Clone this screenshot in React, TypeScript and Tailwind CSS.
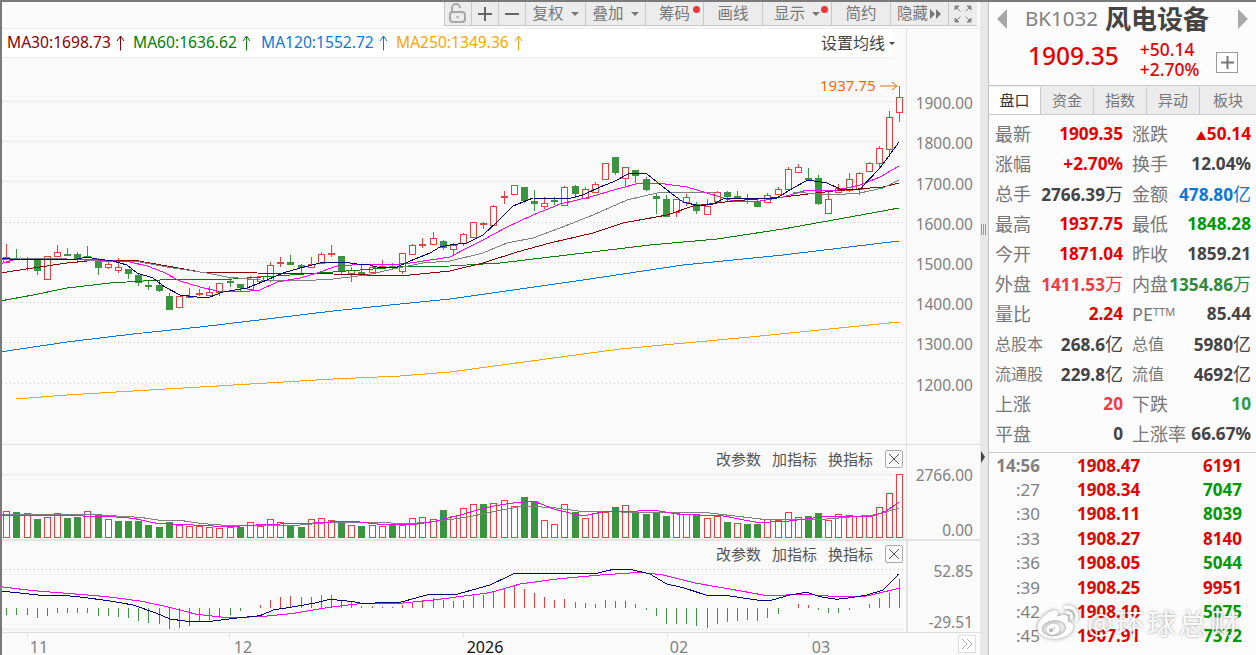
import { ReactNode } from "react";
import { FaWeibo } from "react-icons/fa";

const RED = "#e84040";
const GREEN = "#3a9440";

// body top, body bottom, wick top, wick bottom (page px), colour
const CANDLES: [number, number, number, number, "r" | "g"][] = [
  [257, 262, 244, 263, "r"], [258, 260, 249, 260, "g"], [258, 260, 257, 271, "r"], [260, 271, 260, 275, "g"],
  [256, 279, 256, 279, "r"], [252, 256, 245, 257, "r"], [254, 255, 248, 256, "g"], [254, 260, 252, 263, "g"],
  [256, 258, 246, 258, "g"], [261, 268, 258, 275, "g"], [264, 267, 262, 269, "r"], [267, 270, 258, 273, "r"],
  [269, 274, 269, 279, "g"], [275, 283, 273, 286, "g"], [285, 287, 280, 290, "g"], [285, 291, 280, 292, "g"],
  [296, 310, 293, 310, "g"], [296, 307, 296, 307, "r"], [296, 297, 288, 298, "r"], [293, 295, 289, 296, "r"],
  [292, 295, 286, 296, "r"], [283, 292, 283, 296, "r"], [281, 282, 277, 287, "g"], [284, 288, 284, 291, "g"],
  [279, 289, 276, 290, "r"], [276, 281, 276, 283, "r"], [265, 280, 262, 282, "r"], [262, 264, 257, 267, "r"],
  [262, 265, 255, 265, "g"], [265, 268, 264, 275, "g"], [264, 267, 257, 268, "r"], [254, 263, 252, 263, "r"],
  [253, 255, 245, 257, "r"], [256, 272, 256, 274, "g"], [270, 273, 267, 282, "r"], [272, 273, 265, 275, "g"],
  [267, 272, 265, 272, "r"], [266, 267, 260, 267, "r"], [266, 267, 263, 269, "g"], [253, 271, 253, 274, "r"],
  [245, 254, 244, 255, "r"], [244, 246, 238, 248, "r"], [238, 244, 232, 245, "r"], [241, 248, 240, 250, "g"],
  [245, 249, 243, 256, "r"], [234, 243, 233, 246, "r"], [222, 237, 222, 237, "r"], [223, 224, 222, 229, "r"],
  [206, 225, 205, 225, "r"], [196, 197, 191, 204, "r"], [185, 194, 185, 194, "r"], [187, 201, 187, 203, "g"],
  [201, 204, 190, 211, "g"], [203, 206, 197, 209, "r"], [200, 201, 197, 205, "g"], [187, 205, 186, 205, "r"],
  [186, 194, 185, 198, "g"], [189, 198, 187, 198, "r"], [184, 192, 182, 192, "r"], [163, 179, 163, 179, "r"],
  [157, 173, 157, 175, "g"], [167, 178, 167, 186, "r"], [170, 176, 170, 183, "g"], [179, 190, 177, 191, "g"],
  [196, 199, 193, 214, "g"], [199, 217, 195, 217, "g"], [199, 212, 199, 217, "r"], [197, 202, 194, 206, "r"],
  [204, 211, 202, 214, "g"], [206, 214, 199, 215, "r"], [192, 201, 191, 202, "r"], [192, 197, 191, 201, "g"],
  [196, 197, 191, 198, "g"], [198, 199, 194, 204, "g"], [201, 207, 198, 207, "g"], [195, 202, 193, 203, "r"],
  [189, 194, 187, 195, "r"], [169, 189, 167, 190, "r"], [167, 172, 164, 172, "r"], [178, 180, 168, 180, "g"],
  [178, 204, 175, 205, "g"], [199, 213, 190, 213, "r"], [188, 192, 184, 193, "r"], [179, 190, 173, 192, "r"],
  [173, 189, 172, 195, "r"], [163, 171, 162, 171, "r"], [148, 163, 146, 168, "r"], [117, 149, 111, 157, "r"],
  [97, 112, 86, 122, "r"],
];

const VOLUME: [number, "r" | "g"][] = [
  [212, "r"], [216, "g"], [220, "r"], [237, "g"], [232, "r"], [220, "r"], [234, "g"], [232, "g"], [214, "r"], [222, "g"],
  [238, "r"], [243, "g"], [243, "g"], [243, "g"], [255, "g"], [261, "g"], [246, "g"], [255, "r"], [258, "r"], [257, "r"],
  [262, "r"], [265, "r"], [260, "r"], [260, "g"], [247, "r"], [258, "r"], [238, "r"], [247, "r"], [256, "g"], [261, "g"],
  [238, "r"], [235, "r"], [241, "r"], [245, "g"], [256, "r"], [258, "g"], [256, "r"], [258, "r"], [252, "g"], [254, "r"],
  [235, "r"], [232, "r"], [238, "r"], [210, "g"], [227, "r"], [205, "r"], [193, "r"], [192, "g"], [190, "r"], [181, "r"],
  [198, "r"], [171, "g"], [183, "g"], [241, "r"], [253, "r"], [193, "r"], [215, "g"], [235, "r"], [220, "r"], [215, "r"],
  [201, "g"], [196, "r"], [220, "g"], [222, "g"], [218, "g"], [228, "g"], [220, "r"], [222, "r"], [222, "g"], [235, "r"],
  [228, "r"], [246, "g"], [250, "r"], [252, "g"], [252, "g"], [238, "r"], [240, "r"], [217, "r"], [232, "r"], [229, "g"],
  [219, "g"], [240, "r"], [223, "r"], [226, "r"], [228, "r"], [228, "r"], [202, "r"], [160, "r"], [103, "r"],
];

const MACD_BARS = [
  525, 525, 525, 533, 527, 518, 518, 518, 518, 527, 527, 530, 533, 543, 548, 552, 568, 563, 557, 547, 540, 535, 525, 513,
  503, 495, 480, 470, 468, 472, 470, 465, 465, 480, 485, 497, 497, 500, 500, 495, 487, 480, 475, 480, 483, 480, 466, 465,
  455, 448, 438, 447, 459, 470, 480, 477, 486, 489, 492, 480, 483, 483, 492, 510, 527, 553, 553, 553, 557, 563, 552, 545,
  543, 540, 542, 533, 522, 503, 491, 495, 510, 519, 519, 510, 503, 491, 473, 460, 417,
];

const MA5 = "0,258 10,259 33,260 52,259 77,259 87,257 97,259 113,261 127,265 137,273 153,278 165,287 180,295 197,297 210,297 223,292 247,288 267,280 283,273 300,268 320,263 343,262 357,264 370,265 380,268 397,267 410,261 430,253 440,247 450,245 467,243 483,235 497,222 513,206 533,198 567,199 583,195 600,187 613,182 630,173 647,174 657,182 667,190 683,202 700,206 713,204 723,199 750,198 777,198 793,188 808,180 827,183 840,189 860,189 880,168 899,142";
const MA10 = "0,264 13,260 33,259 80,259 100,260 130,262 147,266 163,272 180,281 200,287 217,291 240,292 260,290 277,282 300,278 317,273 337,266 367,264 390,265 410,263 430,260 450,257 467,248 483,240 507,227 533,215 560,204 590,197 617,189 640,183 657,183 687,187 707,193 733,201 760,201 783,197 807,190 837,190 860,185 880,177 899,166";
const MA20 = "0,260 20,258 67,259 100,261 140,262 173,268 207,273 227,277 260,280 300,281 333,279 367,275 393,269 423,263 450,261 483,253 507,243 533,238 560,228 593,215 627,200 657,193 717,192 793,192 833,195 860,193 883,188 899,180";
const MA30 = "0,273 33,268 67,263 97,260 133,260 167,266 200,272 257,273 333,274 400,276 450,271 483,263 517,252 550,243 593,233 623,223 667,215 693,206 733,201 783,197 833,191 883,187 899,183";
const MA60 = "0,301 33,295 67,288 110,283 160,280 233,279 333,272 400,267 450,266 500,263 567,255 650,245 717,239 783,229 850,217 899,208";
const MA120 = "0,352 67,342 133,334 200,327 267,319 333,311 400,304 450,299 583,280 683,265 783,255 899,241";
const MA250 = "16,399 67,395 133,391 200,387 267,383 333,379 400,376 450,372 620,349 750,337 899,322";

// volume and macd lines, as read from the 3x crops
const z = (pts: number[][], ox: number) => pts.map(([x, y]) => `${ox + x / 3},${440 + y / 3}`).join(" ");
const VOL_MA5 =
  z([[0, 225], [180, 225], [250, 228], [310, 228], [400, 235], [470, 250], [540, 253], [640, 258], [720, 258], [800, 253], [920, 250], [1010, 245], [1070, 245], [1130, 252], [1230, 255], [1300, 245], [1380, 225], [1470, 200]], 0) +
  " " + z([[60, 190], [130, 183], [200, 210], [280, 228], [340, 215], [500, 212], [560, 222], [700, 228], [800, 247], [880, 245], [1000, 230], [1150, 228], [1190, 212], [1226, 187]], 490);
const VOL_MA10 =
  z([[0, 222], [300, 225], [420, 232], [480, 241], [540, 241], [600, 250], [700, 258], [800, 255], [900, 255], [1000, 247], [1100, 248], [1240, 250], [1300, 245], [1400, 232], [1470, 217]], 0) +
  " " + z([[100, 198], [190, 203], [280, 215], [500, 217], [650, 218], [820, 238], [1000, 238], [1160, 224], [1226, 205]], 490);
const DIF =
  z([[0, 453], [70, 460], [130, 467], [200, 467], [250, 472], [330, 483], [400, 495], [470, 520], [510, 537], [570, 545], [640, 543], [720, 533], [780, 527], [820, 510], [900, 497], [950, 488], [990, 478], [1060, 485], [1090, 491], [1160, 487], [1200, 487], [1280, 465], [1370, 463], [1470, 435]], 0) +
  " " + z([[70, 402], [320, 400], [370, 388], [420, 388], [480, 402], [530, 432], [580, 443], [650, 466], [720, 468], [800, 480], [840, 482], [900, 465], [950, 457], [990, 470], [1040, 478], [1090, 472], [1130, 465], [1180, 450], [1226, 402]], 490);
const DEA =
  z([[0, 440], [100, 452], [200, 460], [320, 470], [420, 483], [500, 500], [590, 523], [680, 533], [780, 530], [880, 520], [980, 503], [1070, 492], [1200, 490], [1300, 480], [1470, 458]], 0) +
  " " + z([[90, 432], [200, 417], [330, 405], [450, 397], [520, 405], [620, 430], [720, 447], [830, 467], [950, 463], [1040, 470], [1130, 468], [1226, 445]], 490);

const barX = (i: number) => Math.round(6.3 + 10.148 * i);

function Line({ points, color }: { points: string; color: string }) {
  return <polyline points={points} fill="none" stroke={color} strokeWidth={1} shapeRendering="crispEdges" />;
}

function DotLine({ y }: { y: number }) {
  return <line x1={2} x2={906} y1={y + 0.5} y2={y + 0.5} stroke="#cfcfcf" strokeDasharray="1 3" />;
}

function Candle({ i }: { i: number }) {
  const [top, bot, wt, wb, c] = CANDLES[i];
  const x = barX(i);
  const color = c === "r" ? RED : GREEN;
  const solid = c === "g" || bot - top <= 2;
  return (
    <g shapeRendering="crispEdges">
      <line x1={x + 0.5} x2={x + 0.5} y1={wt} y2={top} stroke={color} />
      <line x1={x + 0.5} x2={x + 0.5} y1={bot} y2={wb} stroke={color} />
      {solid ? (
        <rect x={x - 3} y={top} width={7} height={Math.max(bot - top, 2)} fill={color} />
      ) : (
        <rect x={x - 2.5} y={top + 0.5} width={6} height={bot - top} fill="#fafafa" stroke={color} />
      )}
    </g>
  );
}

function UpArrow({ color }: { color: string }) {
  return (
    <svg width="9" height="16" viewBox="0 0 9 16" className="ml-[5px]">
      <path d="M4.5 15.5V1M1 6l3.5-5L8 6" fill="none" stroke={color} />
    </svg>
  );
}

function Caret() {
  return <span className="ml-[7px] inline-block h-0 w-0 border-x-[4px] border-t-[4px] border-x-transparent border-t-[#777]" />;
}

function Cell({ w, children, dot }: { w: string; children: ReactNode; dot?: boolean }) {
  return (
    <div className={`relative flex h-full items-center justify-center border-r border-[#c8c8c8] ${w}`}>
      {children}
      {dot && <span className="absolute top-[4px] right-[3px] h-[7px] w-[7px] rounded-full bg-[#f5333f]" />}
    </div>
  );
}

function Toolbar() {
  return (
    <div className="flex h-[24px] justify-end pr-[3px]">
      <div className="flex border-b border-l border-[#c8c8c8] bg-[#ececec] text-[15.5px] leading-none text-[#777]">
        <Cell w="w-[27px]">
          <svg width="20" height="21" viewBox="0 0 20 21" fill="none" stroke="#a8a8a8" strokeWidth="2">
            <path d="M4 9V5a4 4 0 0 1 8 0" />
            <rect x="2" y="9" width="15" height="10" rx="3" />
            <path d="M9.5 13v2" />
          </svg>
        </Cell>
        <Cell w="w-[27px]">
          <svg width="16" height="16" viewBox="0 0 16 16" stroke="#666" strokeWidth="2">
            <path d="M1 8h14M8 1v14" />
          </svg>
        </Cell>
        <Cell w="w-[27px]">
          <svg width="16" height="16" viewBox="0 0 16 16" stroke="#666" strokeWidth="2">
            <path d="M1 8h14" />
          </svg>
        </Cell>
        <Cell w="w-[60px]">
          复权
          <Caret />
        </Cell>
        <Cell w="w-[60px]">
          叠加
          <Caret />
        </Cell>
        <Cell w="w-[58px]" dot>
          筹码
        </Cell>
        <Cell w="w-[59px]">画线</Cell>
        <Cell w="w-[69px]" dot>
          显示
          <Caret />
        </Cell>
        <Cell w="w-[59px]">简约</Cell>
        <Cell w="w-[58px]">
          隐藏
          <svg width="12" height="10" viewBox="0 0 12 10" fill="#777" className="ml-[2px] shrink-0">
            <path d="M0 0l5 5-5 5zM6 0l5 5-5 5z" />
          </svg>
        </Cell>
        <div className="flex w-[28px] items-center justify-center">
          <svg width="18" height="18" viewBox="0 0 18 18" fill="#888" stroke="#888">
            <path d="M1 1h4L1 5zM3 3l3.5 3.5M17 1h-4l4 4zM15 3l-3.5 3.5M1 17h4l-4-4zM3 15l3.5-3.5M17 17h-4l4-4zM15 15l-3.5-3.5" />
          </svg>
        </div>
      </div>
    </div>
  );
}

function Legend() {
  const items = [
    ["MA30:1698.73", "#8b0000", "w-[126px]"],
    ["MA60:1636.62", "#008000", "w-[128px]"],
    ["MA120:1552.72", "#0a78d8", "w-[135px]"],
    ["MA250:1349.36", "#ffa500", "w-[135px]"],
  ];
  return (
    <div className="flex h-[29px] w-[891px] items-center border-b border-[#ececec] bg-white pl-[5px]">
      {items.map(([t, c, w]) => (
        <div key={t} className={`flex items-center ${w}`}>
          <span className="text-[15.6px] leading-none whitespace-nowrap" style={{ color: c }}>
            {t}
          </span>
          <UpArrow color={c} />
        </div>
      ))}
      <div className="-mr-[2px] ml-auto flex items-center text-[16px] whitespace-nowrap text-[#444]">
        设置均线
        <span className="ml-[4px] inline-block h-0 w-0 border-x-[3px] border-t-[3px] border-x-transparent border-t-[#444]" />
      </div>
    </div>
  );
}

function MainChart() {
  return (
    <svg width="904" height="386" viewBox="2 58 904 386" className="block">
      {[101, 141, 181, 222, 262, 302, 342, 383].map((y) => (
        <DotLine key={y} y={y} />
      ))}
      {CANDLES.map((_, i) => (
        <Candle key={i} i={i} />
      ))}
      <Line points={MA250} color="#ffa500" />
      <Line points={MA120} color="#0a78d8" />
      <Line points={MA60} color="#008000" />
      <Line points={MA30} color="#8b0000" />
      <Line points={MA20} color="#808080" />
      <Line points={MA10} color="#ff00ff" />
      <Line points={MA5} color="#000080" />
      <text x={820} y={91} fontSize={15} fill="#f06a10">
        1937.75
      </text>
      <path d="M880 86h17M892 82l5 4-5 4" fill="none" stroke="#f06a10" />
    </svg>
  );
}

function VolumeChart() {
  return (
    <svg width="904" height="94" viewBox="2 445 904 94" className="block">
      <DotLine y={474} />
      <DotLine y={537} />
      {VOLUME.map(([t, c], i) => {
        const x = barX(i);
        const top = Math.round(440 + t / 3);
        return c === "g" ? (
          <rect key={i} x={x - 3} y={top} width={7} height={538 - top} fill={GREEN} shapeRendering="crispEdges" />
        ) : (
          <rect key={i} x={x - 2.5} y={top + 0.5} width={6} height={537 - top} fill="#fafafa" stroke={RED} shapeRendering="crispEdges" />
        );
      })}
      <Line points={VOL_MA10} color="#808080" />
      <Line points={VOL_MA5} color="#ff00ff" />
    </svg>
  );
}

function MacdChart() {
  return (
    <svg width="904" height="91" viewBox="2 541 904 91" className="block">
      <DotLine y={569} />
      <DotLine y={629} />
      {MACD_BARS.map((t, i) => {
        const y = 440 + t / 3;
        const x = barX(i) + 0.5;
        return <line key={i} x1={x} x2={x} y1={608} y2={y} stroke={t > 505 ? GREEN : RED} shapeRendering="crispEdges" />;
      })}
      <Line points={DEA} color="#ff00ff" />
      <Line points={DIF} color="#000080" />
    </svg>
  );
}

function PaneTools() {
  return (
    <div className="absolute top-[5px] right-[3px] flex h-[18px] items-center text-[15px] leading-none text-[#555]">
      <span>改参数</span>
      <span className="ml-[11px]">加指标</span>
      <span className="ml-[11px]">换指标</span>
      <span className="ml-[12px] flex h-[18px] w-[18px] items-center justify-center rounded-[2px] border border-[#aaa] bg-[#fafafa]">
        <svg width="10" height="10" viewBox="0 0 10 10" stroke="#555">
          <path d="M0 0l10 10M10 0L0 10" />
        </svg>
      </span>
    </div>
  );
}

function AxisLabel({ children, cls = "" }: { children: ReactNode; cls?: string }) {
  return <div className={`flex h-[20px] items-center justify-end pr-[7px] text-[15.5px] leading-none text-[#808080] ${cls}`}>{children}</div>;
}

function TimeAxis() {
  const labels: [string, number, boolean][] = [
    ["11", 39, false],
    ["12", 243, false],
    ["2026", 485, true],
    ["02", 679, false],
    ["03", 821, false],
  ];
  return (
    <div className="flex h-[23px] border-t border-[#dedede]">
      <svg width="956" height="22" viewBox="2 633 956 22" className="block">
        {[27, 229, 463, 667, 808].map((x) => (
          <line key={x} x1={x + 0.5} x2={x + 0.5} y1={633} y2={637} stroke="#dcdcdc" />
        ))}
        {labels.map(([t, x, dark]) => (
          <text key={t} x={x} y={653} fontSize={16} textAnchor="middle" fill={dark ? "#111" : "#808080"}>
            {t}
          </text>
        ))}
      </svg>
      <div className="mt-[2px] flex h-[18px] w-[18px] items-center justify-center border border-[#ddd] bg-white">
        <svg width="12" height="12" viewBox="0 0 12 12" fill="none" stroke="#aaa">
          <path d="M1 1l5 5-5 5M6 1l5 5-5 5" />
        </svg>
      </div>
    </div>
  );
}

function ChartColumn() {
  return (
    <div className="flex w-[980px] shrink-0 flex-col border-l-2 border-[#7a7a7a]">
      <Toolbar />
      <div className="h-[2px]" />
      <div className="flex h-[416px] border-t border-[#ececec]">
        <div className="w-[904px] shrink-0">
          <Legend />
          <MainChart />
        </div>
        <div className="flex-1 border-l border-[#e4e4e4] pt-[65px]">
          {["1900.00", "1800.00", "1700.00", "1600.00", "1500.00", "1400.00", "1300.00", "1200.00"].map((v) => (
            <AxisLabel key={v} cls="mb-[20.2px]">
              {v}
            </AxisLabel>
          ))}
        </div>
      </div>
      <div className="flex h-[95px] border-t border-[#e0e0e0]">
        <div className="relative w-[904px] shrink-0">
          <VolumeChart />
          <PaneTools />
        </div>
        <div className="flex-1 border-l border-[#e4e4e4] pt-[21px]">
          <AxisLabel cls="mb-[35px]">2766.00</AxisLabel>
          <AxisLabel>0.00</AxisLabel>
        </div>
      </div>
      <div className="flex h-[93px] border-t-2 border-[#e4e4e4]">
        <div className="relative w-[904px] shrink-0">
          <MacdChart />
          <div className="absolute top-[-1px] right-0 left-0">
            <div className="relative h-[24px]">
              <PaneTools />
            </div>
          </div>
        </div>
        <div className="flex-1 border-l-2 border-[#e4e4e4] pt-[21px]">
          <AxisLabel cls="mb-[31px]">52.85</AxisLabel>
          <AxisLabel>-29.51</AxisLabel>
        </div>
      </div>
      <TimeAxis />
    </div>
  );
}

function Splitter() {
  return (
    <div className="flex w-[8px] shrink-0 flex-col items-center bg-[#e8e8e8] pt-[222px]">
      <div className="h-[11px] w-[6px] bg-[repeating-linear-gradient(90deg,#999_0,#999_1px,transparent_1px,transparent_2px)]" />
      <div className="mt-[216px] mr-[2px] h-0 w-0 border-y-[6px] border-l-[4px] border-y-transparent border-l-[#444]" />
    </div>
  );
}

const Cn = ({ children }: { children: ReactNode }) => <span className="text-[18px] font-normal">{children}</span>;

const DARK = "text-[#444]";
const R = "text-[#e60000]";
const G = "text-[#009900]";

type Row = [string, ReactNode, string, string, ReactNode, string, boolean?];

const ROWS: Row[] = [
  ["最新", "1909.35", R, "涨跌", <><span className="text-[11px]">▲</span>50.14</>, R],
  ["涨幅", "+2.70%", R, "换手", "12.04%", DARK],
  ["总手", <>2766.39<Cn>万</Cn></>, DARK, "金额", <>478.80<Cn>亿</Cn></>, "text-[#0a78d8]"],
  ["最高", "1937.75", R, "最低", "1848.28", G],
  ["今开", "1871.04", R, "昨收", "1859.21", DARK],
  ["外盘", <>1411.53<Cn>万</Cn></>, "text-[#ee3b44]", "内盘", <>1354.86<Cn>万</Cn></>, "text-[#2e8b3e]"],
  ["量比", "2.24", R, "PE", "85.44", DARK],
  ["总股本", <>268.6<Cn>亿</Cn></>, DARK, "总值", <>5980<Cn>亿</Cn></>, DARK, true],
  ["流通股", <>229.8<Cn>亿</Cn></>, DARK, "流值", <>4692<Cn>亿</Cn></>, DARK, true],
  ["上涨", "20", "text-[#ee3b44]", "下跌", "10", "text-[#2e9a3e]"],
  ["平盘", "0", DARK, "上涨率", "66.67%", DARK],
];

const TICKS: [string, string, string, string][] = [
  ["14:56", "1908.47", "6191", R],
  [":27", "1908.34", "7047", G],
  [":30", "1908.11", "8039", G],
  [":33", "1908.27", "8140", R],
  [":36", "1908.05", "5044", G],
  [":39", "1908.25", "9951", R],
  [":42", "1908.10", "5075", G],
  [":45", "1907.91", "7372", G],
];

function QuoteHeader() {
  return (
    <div className="h-[83px]">
      <div className="flex h-[33px] items-center pl-[8px]">
        <div className="h-0 w-0 border-y-[10px] border-r-[10px] border-y-transparent border-r-[#a8a8a8]" />
        <span className="ml-[18px] text-[20.5px] leading-none text-[#808080]">BK1032</span>
        <span className="ml-[7px] text-[26px] leading-none font-bold text-[#444]">风电设备</span>
        <div className="ml-[29px] h-0 w-0 border-y-[10px] border-l-[10px] border-y-transparent border-l-[#a8a8a8]" />
      </div>
      <div className="mt-[4px] flex items-center pl-[39px]">
        <span className="mb-[6px] text-[24.5px] leading-none font-medium text-[#e60000]">1909.35</span>
        <div className="ml-[21px] flex flex-col text-[17.5px] leading-[20px] font-medium text-[#e60000]">
          <span>+50.14</span>
          <span>+2.70%</span>
        </div>
        <div className="mt-[6px] ml-[17px] flex h-[21px] w-[22px] items-center justify-center border border-[#999] bg-white">
          <svg width="13" height="13" viewBox="0 0 13 13" stroke="#777" strokeWidth="2">
            <path d="M0 6.5h13M6.5 0v13" />
          </svg>
        </div>
      </div>
    </div>
  );
}

function Tabs() {
  const tabs = ["盘口", "资金", "指数", "异动", "板块"];
  return (
    <div className="flex h-[30px] border-y border-[#c8c8c8] bg-[#ececec] pt-[1px] text-[15px] text-[#777]">
      {tabs.map((t, i) => (
        <div
          key={t}
          className={
            i === 0
              ? "flex w-[52px] items-center justify-center border-r border-[#c8c8c8] bg-white text-[#333]"
              : "flex w-[53px] items-center justify-center border-r border-[#c8c8c8] last:flex-1 last:border-r-0"
          }
        >
          {t}
        </div>
      ))}
    </div>
  );
}

function QuoteTable() {
  return (
    <div className="h-[338px] border-b border-[#c8c8c8] pt-[4px] pl-[6px]">
      {ROWS.map(([l1, v1, c1, l2, v2, c2, small]) => (
        <div key={l1} className="flex h-[30px] items-center whitespace-nowrap">
          <div className="flex w-[137px] items-center justify-between pr-[9px]">
            <span className={`${small ? "text-[16px]" : "text-[18px]"} leading-none text-[#777]`}>{l1}</span>
            <span className={`text-[17.2px] leading-none font-bold ${c1}`}>{v1}</span>
          </div>
          <div className="flex w-[119px] items-center justify-between">
            <span className={`${small ? "text-[16px]" : "text-[18px]"} leading-none text-[#777]`}>
              {l2}
              {l2 === "PE" && <sup className="text-[11px]">TTM</sup>}
            </span>
            <span className={`text-[17.2px] leading-none font-bold ${c2}`}>{v2}</span>
          </div>
        </div>
      ))}
    </div>
  );
}

function TickList() {
  return (
    <div className="pl-[6px]">
      {TICKS.map(([t, p, v, c], i) => (
        <div key={t} className="flex h-[24.4px] items-center whitespace-nowrap text-[17px] leading-none">
          <span className={`w-[45px] text-right text-[#808080] ${i === 0 ? "font-bold" : ""}`}>{t}</span>
          <span className="ml-[37px] w-[65px] font-bold text-[#e60000]">{p}</span>
          <span className={`w-[100px] text-right font-bold ${c}`}>{v}</span>
        </div>
      ))}
    </div>
  );
}

function Watermark() {
  return (
    <div className="absolute top-[601px] left-[47px] flex items-center text-white/90">
      <FaWeibo className="h-[41px] w-[44px] text-white drop-shadow-[0_0_2px_rgba(0,0,0,0.45)]" />
      <span className="ml-[7px] text-[29px] leading-[41px] tracking-[2.5px] whitespace-nowrap [text-shadow:0_0_3px_rgba(0,0,0,0.4)]">
        @环球总财
      </span>
    </div>
  );
}

function QuotePanel() {
  return (
    <div className="relative flex-1 border-l border-[#c0c0c0] bg-[#fcfcfc]">
      <QuoteHeader />
      <Tabs />
      <QuoteTable />
      <TickList />
      <Watermark />
    </div>
  );
}

export default function App() {
  return (
    <div className="flex h-[655px] w-[1256px] overflow-hidden border-t-2 border-[#7a7a7a] bg-[#fafafa] font-['Noto_Sans','Noto_Sans_CJK_SC',sans-serif]">
      <ChartColumn />
      <Splitter />
      <QuotePanel />
    </div>
  );
}
